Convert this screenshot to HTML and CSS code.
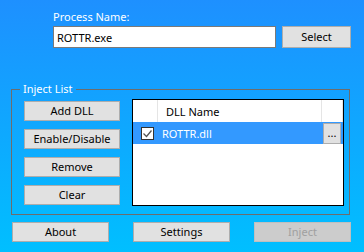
FILE: index.html
```html
<!DOCTYPE html>
<html lang="en">
<head>
  <meta charset="UTF-8">
  <title>DLL Injector</title>
  <link rel="stylesheet" href="styles.css">
</head>
<body>
  <div class="ventana">
    <div class="proceso">
      <label class="etiqueta" for="proceso">Process Name:</label>
      <div class="fila">
        <input type="text" id="proceso" class="caja" value="ROTTR.exe">
        <button class="boton seleccionar">Select</button>
      </div>
    </div>

    <fieldset class="grupo">
      <legend>Inject List</legend>
      <div class="acciones">
        <button class="boton">Add DLL</button>
        <button class="boton">Enable/Disable</button>
        <button class="boton">Remove</button>
        <button class="boton">Clear</button>
      </div>
      <div class="lista">
        <div class="cabecera">
          <div class="col-check"></div>
          <div class="col-nombre">DLL Name</div>
          <div class="col-extra"></div>
        </div>
        <div class="renglon seleccionado">
          <div class="col-check">
            <span class="check">
              <svg width="11" height="11" viewBox="0 0 11 11"><polyline points="1.5,5.5 4.5,8.5 9.5,2.5" fill="none" stroke="#555" stroke-width="1.3"/></svg>
            </span>
          </div>
          <div class="col-nombre">ROTTR.dll</div>
          <div class="col-extra"><button class="puntos">...</button></div>
        </div>
      </div>
    </fieldset>

    <div class="pie">
      <button class="boton">About</button>
      <button class="boton">Settings</button>
      <button class="boton" disabled>Inject</button>
    </div>
  </div>
</body>
</html>
```

FILE: styles.css
```css
html, body {
  margin: 0;
  height: 100%;
}
body {
  font-family: 'Noto Sans', 'Segoe UI', sans-serif;
  font-size: 11px;
  background: linear-gradient(to bottom, #1e90ff, #00bfff);
}
.ventana {
  width: 364px;
  height: 252px;
  box-sizing: border-box;
  padding-top: 9px;
}
.proceso {
  margin-left: 53px;
}
.etiqueta {
  display: block;
  color: #fff;
  line-height: 16px;
  height: 17px;
}
.fila {
  display: flex;
  gap: 6px;
}
.caja {
  box-sizing: border-box;
  width: 223px;
  height: 22px;
  margin: 0;
  padding: 0 3px;
  border: 1px solid #7a7a7a;
  font-family: inherit;
  font-size: 11px;
  color: #000;
  outline: none;
}
.boton {
  box-sizing: border-box;
  height: 20px;
  margin: 0;
  padding: 0;
  background-color: #e1e1e1;
  border: 1px solid #adadad;
  font-family: inherit;
  font-size: 11px;
  color: #000;
  line-height: 16px;
}
.boton:disabled {
  background-color: #cccccc;
  border-color: #bfbfbf;
  color: #a0a0a0;
}
.seleccionar {
  width: 69px;
  height: 22px;
}
.grupo {
  display: flex;
  gap: 12px;
  margin: 33px 14px 0 11px;
  padding: 2px 7px 7px 12px;
  min-inline-size: 0;
  height: 134px;
  box-sizing: border-box;
  border: 1px solid #6d6d6d;
}
.grupo legend {
  color: #fff;
  padding: 0 3px;
  margin-left: -4px;
  line-height: 16px;
}
.acciones {
  display: flex;
  flex-direction: column;
  gap: 8px;
  padding-top: 2px;
}
.acciones .boton {
  width: 96px;
}
.lista {
  width: 212px;
  height: 107px;
  box-sizing: border-box;
  border: 1px solid #000;
  background: #fff;
}
.cabecera, .renglon {
  display: flex;
  height: 22px;
  align-items: stretch;
}
.cabecera > div {
  border-right: 1px solid #e5e5e5;
  display: flex;
  align-items: center;
}
.col-check {
  width: 25px;
  box-sizing: border-box;
  display: flex;
  align-items: center;
  justify-content: center;
}
.col-nombre {
  width: 164px;
  box-sizing: border-box;
  padding-left: 8px;
  display: flex;
  align-items: center;
}
.renglon .col-nombre {
  padding-left: 4px;
}
.col-extra {
  width: 21px;
  box-sizing: border-box;
  display: flex;
  align-items: center;
}
.seleccionado {
  background: #3399ff;
  color: #fff;
}
.check {
  width: 13px;
  height: 13px;
  box-sizing: border-box;
  border: 1px solid #333;
  background: #fff;
  display: flex;
  align-items: center;
  justify-content: center;
  margin-left: 3px;
}
.puntos {
  width: 18px;
  height: 21px;
  margin: 0 0 0 1px;
  padding: 0;
  background: #e1e1e1;
  border: 1px solid #adadad;
  font-family: inherit;
  font-size: 11px;
  line-height: 12px;
}
.pie {
  display: flex;
  gap: 24px;
  margin: 7px 0 0 12px;
}
.pie .boton {
  width: 97px;
}
```
